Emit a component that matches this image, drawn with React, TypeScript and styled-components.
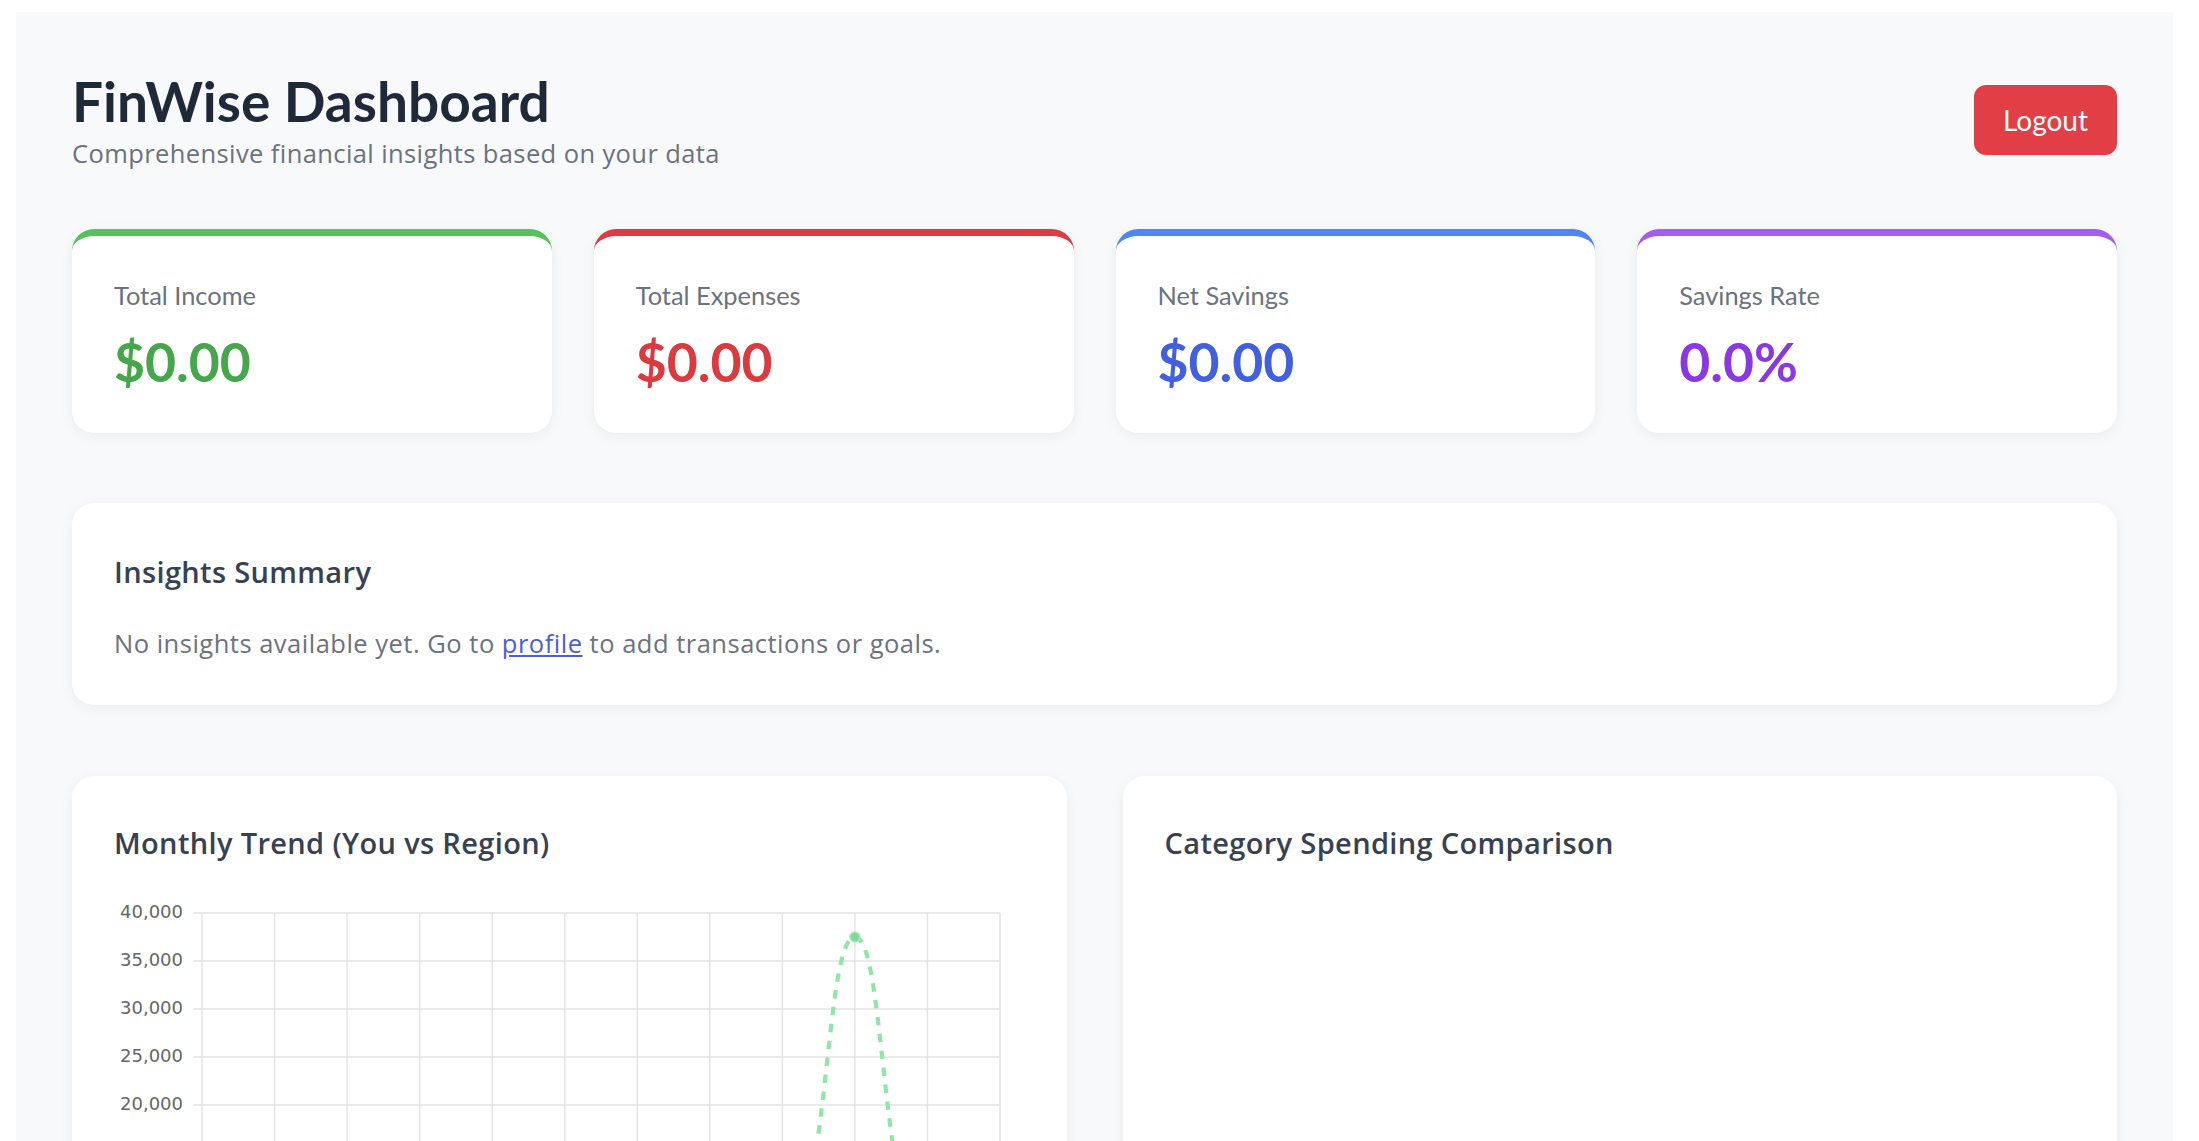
import React from "react";
import styled, { createGlobalStyle } from "styled-components";

const GlobalStyle = createGlobalStyle`
  body {
    margin: 0;
    background: #ffffff;
    font-family: Lato, "Open Sans", sans-serif;
  }
`;

const stats = [
  { label: "Total Income", value: "$0.00", accent: "#55c25c", color: "#46a64b" },
  { label: "Total Expenses", value: "$0.00", accent: "#de3b41", color: "#dc3a3f" },
  { label: "Net Savings", value: "$0.00", accent: "#4f86f4", color: "#4060e0" },
  { label: "Savings Rate", value: "0.0%", accent: "#a45cf1", color: "#8a38e6" },
];

// chart geometry, in svg units (same as page px)
const PLOT_LEFT = 88;
const PLOT_RIGHT = 886;
const PLOT_TOP = 22;
const ROW = 48;
const STEP = (PLOT_RIGHT - PLOT_LEFT) / 11;
const yTicks = [40000, 35000, 30000, 25000, 20000, 15000, 10000, 5000, 0];
const yOf = (v: number) => PLOT_TOP + ((40000 - v) / 5000) * ROW;
const xOf = (i: number) => PLOT_LEFT + i * STEP;

function regionPath() {
  const base = yOf(0);
  const peak = yOf(37500);
  const p8 = xOf(8);
  const p9 = xOf(9);
  const p10 = xOf(10);
  const lift = 0.334;
  return [
    `M ${xOf(0)} ${base}`,
    `L ${p8} ${base}`,
    `C ${p8 + lift * 2 * STEP} ${base - lift * (base - peak)}, ${p9 - 0.4 * STEP} ${peak}, ${p9} ${peak}`,
    `C ${p9 + 0.4 * STEP} ${peak}, ${p10 - lift * 2 * STEP} ${base - lift * (base - peak)}, ${p10} ${base}`,
    `L ${xOf(11)} ${base}`,
  ].join(" ");
}

function TrendChart() {
  return (
    <ChartSvg viewBox="0 0 910 460" width={910} height={460}>
      {Array.from({ length: 12 }).map((_, i) => (
        <line
          key={`v${i}`}
          x1={xOf(i)}
          x2={xOf(i)}
          y1={PLOT_TOP}
          y2={yOf(0) + 8}
          stroke="#e3e3e3"
          strokeWidth={1.4}
        />
      ))}
      {yTicks.map((t) => (
        <g key={t}>
          <line
            x1={PLOT_LEFT - 8}
            x2={PLOT_RIGHT}
            y1={yOf(t)}
            y2={yOf(t)}
            stroke="#e3e3e3"
            strokeWidth={1.4}
          />
          <text
            x={PLOT_LEFT - 19}
            y={yOf(t)}
            textAnchor="end"
            dominantBaseline="middle"
            fontSize={18}
            fontFamily="'DejaVu Sans', Verdana, sans-serif"
            fill="#666666"
          >
            {t.toLocaleString("en-US")}
          </text>
        </g>
      ))}
      <path
        d={regionPath()}
        fill="none"
        stroke="#8fe6a6"
        strokeWidth={4.2}
        strokeDasharray="8.5 8.5"
      />
      <circle cx={xOf(9)} cy={yOf(37500)} r={5} fill="#7fd99a" stroke="#a8ecbb" strokeWidth={1.6} />
    </ChartSvg>
  );
}

function App() {
  return (
    <>
      <GlobalStyle />
      <Page>
        <Header>
          <div>
            <Title>FinWise Dashboard</Title>
            <Subtitle>Comprehensive financial insights based on your data</Subtitle>
          </div>
          <LogoutButton>Logout</LogoutButton>
        </Header>

        <StatsGrid>
          {stats.map((s) => (
            <StatCard key={s.label} $accent={s.accent}>
              <StatLabel>{s.label}</StatLabel>
              <StatValue $color={s.color}>{s.value}</StatValue>
            </StatCard>
          ))}
        </StatsGrid>

        <InsightsCard>
          <CardTitle>Insights Summary</CardTitle>
          <InsightsText>
            No insights available yet. Go to <ProfileLink href="#">profile</ProfileLink> to add
            transactions or goals.
          </InsightsText>
        </InsightsCard>

        <ChartsGrid>
          <ChartCard>
            <ChartTitle>Monthly Trend (You vs Region)</ChartTitle>
            <TrendChart />
          </ChartCard>
          <ChartCard>
            <ChartTitle>Category Spending Comparison</ChartTitle>
          </ChartCard>
        </ChartsGrid>
      </Page>
    </>
  );
}

const Page = styled.div`
  margin: 12px 26px 0 16px;
  padding: 56px 56px 56px;
  background: #f8f9fb;
  min-height: 1200px;
`;

const Header = styled.header`
  display: flex;
  justify-content: space-between;
  align-items: center;
  margin-bottom: 57px;
`;

const Title = styled.h1`
  margin: 0;
  font-size: 55px;
  line-height: 1.2;
  font-weight: 700;
  color: #1f2937;
`;

const Subtitle = styled.p`
  margin: 0;
  font-family: "Open Sans", sans-serif;
  font-size: 25.5px;
  letter-spacing: 0.4px;
  line-height: 1.5;
  color: #6b7280;
`;

const LogoutButton = styled.button`
  background: #e13f45;
  color: #ffffff;
  border: none;
  border-radius: 12px;
  padding: 14px 29px;
  font-family: inherit;
  font-size: 28px;
  line-height: 42px;
  cursor: pointer;
`;

const StatsGrid = styled.div`
  display: grid;
  grid-template-columns: repeat(4, 1fr);
  gap: 42px;
  margin-bottom: 70px;
`;

const StatCard = styled.div<{ $accent: string }>`
  background: #ffffff;
  border-radius: 22px;
  border-top: 7px solid ${(p) => p.$accent};
  box-shadow: 0 3px 14px rgba(0, 0, 0, 0.06);
  padding: 40px 42px 39px;
`;

const StatLabel = styled.div`
  font-size: 25.4px;
  line-height: 1.5;
  color: #6b7280;
  margin-bottom: 15px;
`;

const StatValue = styled.div<{ $color: string }>`
  font-size: 53.5px;
  line-height: 1.2;
  font-weight: 700;
  color: ${(p) => p.$color};
`;

const Card = styled.section`
  background: #ffffff;
  border-radius: 22px;
  box-shadow: 0 3px 14px rgba(0, 0, 0, 0.06);
  padding: 42px;
`;

const InsightsCard = styled(Card)`
  margin-bottom: 71px;
  padding-bottom: 42px;
`;

const CardTitle = styled.h3`
  margin: 10px 0 35px;
  font-family: "Open Sans", sans-serif;
  font-size: 29px;
  letter-spacing: 0.35px;
  line-height: 1.2;
  font-weight: 600;
  color: #374151;
`;

const InsightsText = styled.p`
  margin: 0;
  font-family: "Open Sans", sans-serif;
  font-size: 25.5px;
  letter-spacing: 0.5px;
  line-height: 1.5;
  color: #6b7280;
`;

const ProfileLink = styled.a`
  color: #4a5fd3;
  text-decoration: underline;
`;

const ChartsGrid = styled.div`
  display: grid;
  grid-template-columns: 1fr 1fr;
  gap: 56px;
`;

const ChartCard = styled(Card)`
  min-height: 600px;
`;

const ChartTitle = styled(CardTitle)`
  margin: 8px 0 31px;
`;

const ChartSvg = styled.svg`
  display: block;
`;

export default App;
